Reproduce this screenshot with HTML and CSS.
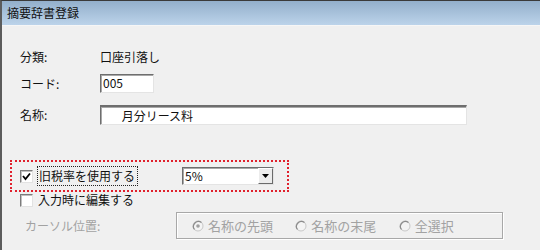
FILE: index.html
```html
<!DOCTYPE html>
<html>
<head>
  <meta charset="UTF-8">
  <title>摘要辞書登録</title>
  <link rel="stylesheet" href="styles.css">
</head>
<body>

  <div class="win">
    <div class="titlebar">摘要辞書登録</div>

    <div class="content">
      <div class="row row-class">
        <span class="lbl">分類:</span>
        <span class="val">口座引落し</span>
      </div>

      <div class="row row-code">
        <span class="lbl">コード:</span>
        <div class="field code">005</div>
      </div>

      <div class="row row-name">
        <span class="lbl">名称:</span>
        <div class="field name">　 月分リース料</div>
      </div>

      <div class="highlight">
        <div class="check-row">
          <span class="chk">
            <svg width="9" height="9" viewBox="0 0 9 9"><polyline points="1,4 3.5,7 8,1.5" fill="none" stroke="#000" stroke-width="1.8"/></svg>
          </span>
          <span class="chk-label focus">旧税率を使用する</span>
        </div>
        <div class="combo">
          <span class="combo-text">5%</span>
          <span class="combo-btn">
            <svg width="7" height="4" viewBox="0 0 7 4"><polygon points="0,0 7,0 3.5,4" fill="#000"/></svg>
          </span>
        </div>
      </div>

      <div class="check-row plain">
        <span class="chk"></span>
        <span class="chk-label">入力時に編集する</span>
      </div>

      <div class="cursor-row">
        <span class="lbl dis">カーソル位置:</span>
        <div class="group">
          <div class="radio-item">
            <svg width="12" height="12" viewBox="0 0 12 12">
              <circle cx="6" cy="6" r="5" fill="#f4f4f4" stroke="#c8c8c8"/>
              <path d="M2.5 9.5 A5 5 0 0 1 9.5 2.5" fill="none" stroke="#8c8c8c" stroke-width="1.2"/>
              <circle cx="6" cy="6" r="1.8" fill="#a0a0a0"/>
            </svg>
            <span>名称の先頭</span>
          </div>
          <div class="radio-item">
            <svg width="12" height="12" viewBox="0 0 12 12">
              <circle cx="6" cy="6" r="5" fill="#f4f4f4" stroke="#c8c8c8"/>
              <path d="M2.5 9.5 A5 5 0 0 1 9.5 2.5" fill="none" stroke="#8c8c8c" stroke-width="1.2"/>
            </svg>
            <span>名称の末尾</span>
          </div>
          <div class="radio-item">
            <svg width="12" height="12" viewBox="0 0 12 12">
              <circle cx="6" cy="6" r="5" fill="#f4f4f4" stroke="#c8c8c8"/>
              <path d="M2.5 9.5 A5 5 0 0 1 9.5 2.5" fill="none" stroke="#8c8c8c" stroke-width="1.2"/>
            </svg>
            <span>全選択</span>
          </div>
        </div>
      </div>
    </div>
  </div>

</body>
</html>
```

FILE: styles.css
```css
body {
  margin: 0;
  background: #f0f0f0;
  font-family: "Noto Sans CJK JP", "DejaVu Sans", sans-serif;
  font-size: 12px;
  color: #111;
}
.win {
  width: 540px;
  height: 250px;
  box-sizing: border-box;
  border-top: 1px solid #3a3a3a;
  border-left: 2px solid #5c5c5c;
  overflow: hidden;
}
.titlebar {
  height: 24px;
  line-height: 24px;
  padding-left: 5px;
  background: linear-gradient(#93afcb, #bcd3ea);
  color: #101010;
}
.content {
  padding: 21px 0 0 8px;
  border-top: 1px solid #f6f6f6;
}
.row {
  display: flex;
  align-items: center;
  padding-left: 10px;
}
.lbl {
  width: 80px;
  line-height: 1;
}
.val {
  line-height: 1;
}
.row-class {
  height: 20px;
}
.row-code {
  margin-top: 7px;
  height: 19px;
}
.row-name {
  margin-top: 12px;
  height: 20px;
}
.field {
  box-sizing: border-box;
  background: #fff;
  border: 1px solid;
  border-color: #6e6e6e #e4e4e4 #e4e4e4 #6e6e6e;
  box-shadow: inset 1px 1px 0 #a8a8a8;
  line-height: 16px;
  padding-left: 2px;
}
.code {
  width: 54px;
  height: 19px;
}
.name {
  width: 367px;
  height: 20px;
  line-height: 17px;
  border-top-width: 2px;
  padding-left: 6px;
}
.highlight {
  margin-top: 35px;
  width: 279px;
  height: 32px;
  box-sizing: border-box;
  border: 2px dotted #e0202c;
  display: flex;
  align-items: center;
  padding-left: 8px;
}
.check-row {
  display: flex;
  align-items: center;
  width: 162px;
}
.chk {
  width: 13px;
  height: 13px;
  box-sizing: border-box;
  background: #fff;
  border: 1px solid;
  border-color: #7c7c7c #e2e2e2 #e2e2e2 #7c7c7c;
  box-shadow: inset 1px 1px 0 #c0c0c0;
  display: flex;
  align-items: center;
  justify-content: center;
}
.chk-label {
  margin-left: 4px;
  line-height: 16px;
  padding: 1px 2px 1px 1px;
  border: 1px dotted transparent;
}
.chk-label.focus {
  border-color: #222;
}
.combo {
  width: 92px;
  height: 18px;
  box-sizing: border-box;
  background: #fff;
  border: 1px solid;
  border-color: #6e6e6e #e4e4e4 #e4e4e4 #6e6e6e;
  box-shadow: inset 1px 1px 0 #a8a8a8;
  display: flex;
  align-items: stretch;
}
.combo-text {
  flex: 1;
  line-height: 15px;
  padding-left: 2px;
}
.combo-btn {
  width: 15px;
  box-sizing: border-box;
  background: #ececec;
  border: 1px solid;
  border-color: #fff #6a6a6a #6a6a6a #fff;
  display: flex;
  align-items: center;
  justify-content: center;
}
.plain {
  margin-top: 1px;
  margin-left: 10px;
  height: 14px;
}
.plain .chk-label {
  margin-left: 3px;
}
.cursor-row {
  display: flex;
  align-items: center;
  margin-top: 5px;
  padding-left: 15px;
}
.lbl.dis {
  width: 151px;
  color: #a2a2a2;
}
.group {
  width: 327px;
  height: 27px;
  box-sizing: border-box;
  border: 1px solid #a8a8a8;
  box-shadow: 1px 1px 0 #fff, inset 1px 1px 0 #fff;
  display: flex;
  align-items: center;
  padding-left: 15px;
  color: #a2a2a2;
}
.radio-item {
  display: flex;
  align-items: center;
  gap: 4px;
  width: 113px;
}
.radio-item span {
  line-height: 1;
  font-size: 13px;
}
```
